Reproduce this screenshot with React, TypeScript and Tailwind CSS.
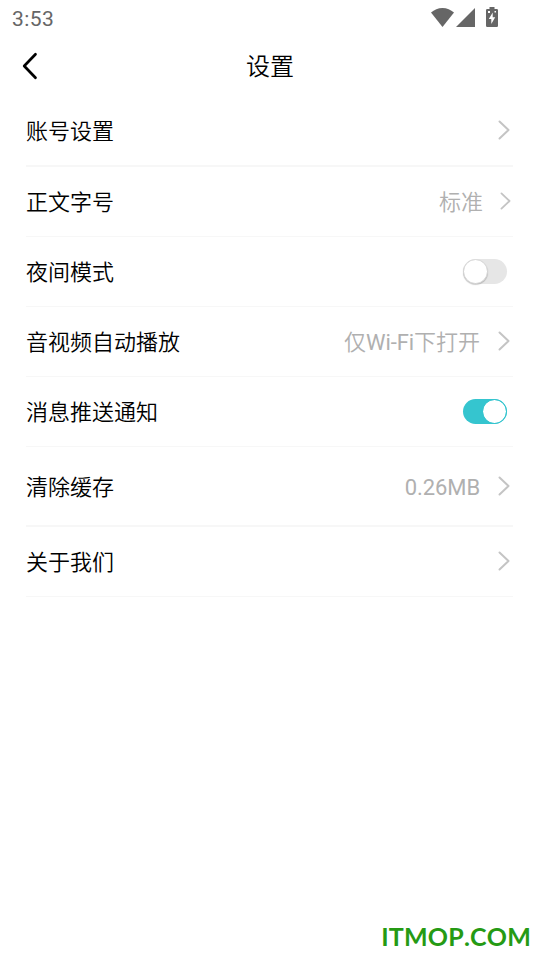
import { ReactNode } from "react";
import clsx from "clsx";

function Chevron({ small, className }: { small?: boolean; className?: string }) {
  return (
    <svg
      className={clsx(
        small ? "mr-[2px] h-[18px] w-[11px]" : "mr-[3px] h-5 w-3",
        className || "mb-[2px]"
      )}
      viewBox="0 0 12 20"
      fill="none"
      stroke="#c4c4c4"
      strokeWidth="2"
      strokeLinecap="round"
      strokeLinejoin="round"
    >
      <path d="M1.5 1.5L10.5 10L1.5 18.5" />
    </svg>
  );
}

function Toggle({ on }: { on?: boolean }) {
  return (
    <button
      type="button"
      role="switch"
      aria-checked={!!on}
      className={clsx(
        "mr-1.5 flex h-[25px] w-11 items-center rounded-full",
        on ? "justify-end bg-[#35c5cf]" : "justify-start bg-[#e6e6e6]"
      )}
    >
      <span
        className={clsx(
          "size-[25px] rounded-full border bg-white bg-clip-padding",
          on
            ? "border-[#35c5cf]"
            : "border-[#dcdcdc] shadow-[0_1px_1px_rgba(0,0,0,0.2)]"
        )}
      />
    </button>
  );
}

function Row({
  label,
  className,
  children,
}: {
  label: string;
  className?: string;
  children: ReactNode;
}) {
  return (
    <li
      className={clsx(
        "flex items-center justify-between border-[#f7f7f7]",
        className || "h-[70px] border-b"
      )}
    >
      <span className="pt-[3px] text-[22px] font-[350] leading-8 text-black">{label}</span>
      <div className="flex items-center">{children}</div>
    </li>
  );
}

function Value({ className, children }: { className?: string; children: ReactNode }) {
  return (
    <span className={clsx("text-[22px] leading-8 text-[#b0b0b0]", className)}>
      {children}
    </span>
  );
}

function StatusBar() {
  return (
    <div className="flex h-9 items-center justify-between pl-3 pr-[42px] text-[#666]">
      <span className="pt-[2px] text-[21px] font-[450] leading-6 tracking-[0.4px]">3:53</span>
      <div className="flex items-start pb-[2px]">
        <svg className="h-[19px] w-[23px]" viewBox="0 0 23 19" fill="currentColor">
          <path d="M0 4.6C3.2 1.7 7.2 0 11.5 0S19.8 1.7 23 4.6L11.5 19Z" />
        </svg>
        <svg className="ml-[2px] h-[19px] w-[19px]" viewBox="0 0 19 19" fill="currentColor">
          <path d="M19 0V19H0Z" />
        </svg>
        <svg className="ml-[11px] -mt-px h-5 w-3" viewBox="0 0 12 20" fill="currentColor">
          <path d="M3.5 0H8.5V2H10.8Q12 2 12 3.2V18.8Q12 20 10.8 20H1.2Q0 20 0 18.8V3.2Q0 2 1.2 2H3.5Z" />
          <path d="M6.7 5.5L2.8 12H5.3V17L9.2 10.3H6.7Z" fill="#fff" />
          <path d="M2 4H4V6H2ZM8.5 4H10V5.5H8.5Z" fill="#fff" />
        </svg>
      </div>
    </div>
  );
}

export default function App() {
  return (
    <main className="flex h-screen w-full flex-col bg-white font-['Roboto','Noto_Sans_CJK_SC',sans-serif]">
      <StatusBar />
      <header className="grid h-[60px] grid-cols-[1fr_auto_1fr] items-center">
        <button type="button" aria-label="返回" className="pl-[22px]">
          <svg
            className="h-7 w-4"
            viewBox="0 0 16 28"
            fill="none"
            stroke="#000"
            strokeWidth="2.7"
            strokeLinecap="round"
            strokeLinejoin="round"
          >
            <path d="M13.5 2.2L2.2 14L13.5 25.8" />
          </svg>
        </button>
        <h1 className="pt-[2px] text-2xl font-[350] text-black">设置</h1>
      </header>

      <ul className="pl-[26px] pr-[27px]">
        <Row label="账号设置" className="h-[71px] border-b-2">
          <Chevron />
        </Row>
        <Row label="正文字号">
          <Value className="mr-[17px] pt-[3px] font-[350]">标准</Value>
          <Chevron small />
        </Row>
        <Row label="夜间模式">
          <Toggle />
        </Row>
        <Row label="音视频自动播放">
          <Value className="mr-[18px] pt-[3px] font-[350]">
            仅<span className="font-normal tracking-[-0.1px]">Wi-Fi</span>下打开
          </Value>
          <Chevron />
        </Row>
        <Row label="消息推送通知">
          <Toggle on />
        </Row>
        <Row label="清除缓存" className="h-20 border-b-2">
          <Value className="mr-[18px] pt-[4px] tracking-[-0.1px]">0.26MB</Value>
          <Chevron className="mb-0" />
        </Row>
        <Row label="关于我们">
          <Chevron />
        </Row>
      </ul>

      <footer className="mt-auto pb-[7px] pr-[9px] text-right font-['Lato','Open_Sans',sans-serif] text-[25px] font-bold leading-[34px] tracking-[0.2px] text-[#259a14] [font-kerning:none]">
        ITMOP.COM
      </footer>
    </main>
  );
}
